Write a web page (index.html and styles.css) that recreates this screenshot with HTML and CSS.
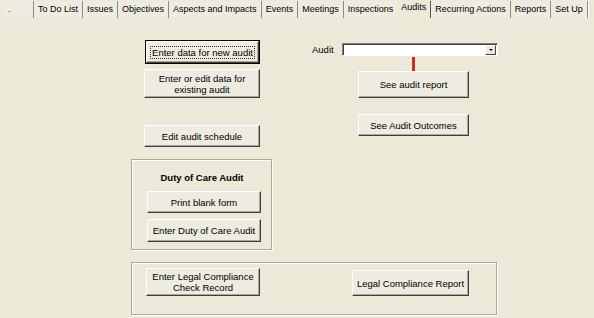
FILE: index.html
```html
<!DOCTYPE html>
<html lang="en">
<head>
  <meta charset="UTF-8">
  <title>Audits</title>
  <link rel="stylesheet" href="styles.css">
</head>
<body>
  <!-- Tab strip -->
  <div class="tabs">
    <div class="tab tab-first">.</div>
    <div class="tab">To Do List</div>
    <div class="tab">Issues</div>
    <div class="tab">Objectives</div>
    <div class="tab">Aspects and Impacts</div>
    <div class="tab">Events</div>
    <div class="tab">Meetings</div>
    <div class="tab before-active">Inspections</div>
    <div class="tab active">Audits</div>
    <div class="tab">Recurring Actions</div>
    <div class="tab">Reports</div>
    <div class="tab">Set Up</div>
  </div>

  <div class="page">
    <div class="columns">
      <div class="col-left">
        <button class="btn btn-new focused"><span class="focus-rect">Enter data for new audit</span></button>
        <button class="btn btn-edit">Enter or edit data for<br>existing audit</button>
        <button class="btn btn-sched">Edit audit schedule</button>

        <div class="group group-doc">
          <div class="group-title">Duty of Care Audit</div>
          <button class="btn btn-print">Print blank form</button>
          <button class="btn btn-doc">Enter Duty of Care Audit</button>
        </div>
      </div>

      <div class="col-right">
        <div class="audit-row">
          <span class="audit-label">Audit</span>
          <div class="combo">
            <div class="combo-field"></div>
            <div class="combo-arrow"><span class="arrow"></span></div>
          </div>
        </div>
        <div class="red-mark"></div>
        <button class="btn btn-report">See audit report</button>
        <button class="btn btn-outcomes">See Audit Outcomes</button>
      </div>
    </div>

    <div class="group group-legal">
      <button class="btn btn-legal">Enter Legal Compliance<br>Check Record</button>
      <button class="btn btn-legal-report">Legal Compliance Report</button>
    </div>
  </div>
</body>
</html>
```

FILE: styles.css
```css
* {
  box-sizing: border-box;
}

body {
  margin: 0;
  background-color: #ECE9D8;
  font-family: "Liberation Sans", Arial, sans-serif;
  font-size: 9.5px;
  color: #000;
  width: 594px;
  height: 318px;
  overflow: hidden;
}

/* Tab strip */
.tabs {
  display: flex;
  height: 18px;
  padding-left: 2px;
  padding-top: 1px;
}

.tab {
  flex-shrink: 0;
  height: 17px;
  line-height: 17px;
  padding: 0 4px;
  font-size: 9px;
  white-space: nowrap;
  background-color: #EEECE1;
  border-right: 1px solid #8E8C82;
  box-shadow: 1px 0 0 #fff;
}

.tab-first {
  width: 32px;
  padding-left: 6px;
}

.before-active {
  border-right: none;
  box-shadow: none;
}

.tab.active {
  background-color: #ECE9D8;
  line-height: 13px;
  border-right: 1px solid #555;
}

/* Main form */
.page {
  padding-left: 131px;
}

.columns {
  display: flex;
}

.col-left {
  width: 141px;
  display: flex;
  flex-direction: column;
  align-items: flex-start;
}

.col-right {
  margin-left: 40px;
  display: flex;
  flex-direction: column;
  align-items: flex-start;
}

/* Classic 3D buttons */
.btn {
  font-family: inherit;
  font-size: 9.5px;
  line-height: 11px;
  color: #000;
  background-color: #EEEBE0;
  border: 1px solid;
  border-color: #fff #3E3E3E #3E3E3E #fff;
  box-shadow: inset -1px -1px 0 #ACA899;
  padding: 0;
  text-align: center;
  cursor: pointer;
}

.btn.focused {
  outline: 1px solid #000;
}

.focus-rect {
  border: 1px dotted #333;
  padding: 0 1px;
}

.btn-new {
  margin: 23px 0 0 15px;
  width: 113px;
  height: 22px;
}

.btn-edit {
  margin: 6px 0 0 13px;
  width: 116px;
  height: 29px;
}

.btn-sched {
  margin: 27px 0 0 13px;
  width: 116px;
  height: 22px;
}

/* Etched group boxes */
.group {
  border: 1px solid #ACA899;
  box-shadow: inset 1px 1px 0 #fff, 1px 1px 0 #fff;
}

.group-doc {
  margin-top: 12px;
  width: 141px;
  height: 91px;
  padding: 12px 0 0 15px;
}

.group-title {
  width: 110px;
  text-align: center;
  font-weight: bold;
  font-size: 9.5px;
  line-height: 12px;
}

.btn-print {
  display: block;
  margin-top: 7px;
  width: 114px;
  height: 22px;
}

.btn-doc {
  display: block;
  margin-top: 6px;
  width: 114px;
  height: 23px;
}

.group-legal {
  margin-top: 12px;
  width: 366px;
  height: 53px;
  display: flex;
  align-items: flex-start;
  padding: 5px 0 0 14px;
}

.btn-legal {
  width: 114px;
  height: 28px;
}

.btn-legal-report {
  margin: 2px 0 0 92px;
  width: 117px;
  height: 26px;
}

/* Audit picker */
.audit-row {
  display: flex;
  align-items: center;
  margin-top: 24px;
  height: 14px;
}

.audit-label {
  width: 30px;
}

.combo {
  display: flex;
  width: 156px;
  height: 13px;
  border: 1px solid;
  border-color: #7F7F7F #fff #fff #7F7F7F;
  box-shadow: inset 1px 1px 0 #404040;
  background-color: #fff;
}

.combo-field {
  flex: 1;
}

.combo-arrow {
  width: 11px;
  height: 10px;
  margin: 1px 1px 0 0;
  background-color: #ECE9D8;
  border: 1px solid;
  border-color: #fff #404040 #404040 #fff;
  display: flex;
  align-items: center;
  justify-content: center;
}

.arrow {
  width: 0;
  height: 0;
  border-left: 2px solid transparent;
  border-right: 2px solid transparent;
  border-top: 2px solid #000;
}

.red-mark {
  margin: 1px 0 0 100px;
  width: 3px;
  height: 14px;
  background-color: #D42A24;
}

.btn-report {
  margin-left: 46px;
  width: 111px;
  height: 27px;
}

.btn-outcomes {
  margin: 16px 0 0 46px;
  width: 111px;
  height: 22px;
}
```
